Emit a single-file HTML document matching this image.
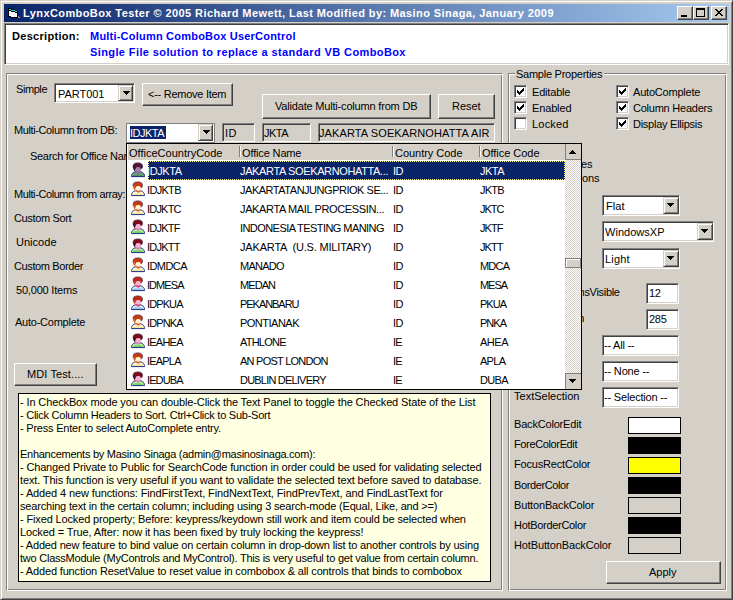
<!DOCTYPE html>
<html><head><meta charset="utf-8">
<style>
html,body{margin:0;padding:0;}
body{width:733px;height:600px;overflow:hidden;background:#d4d0c8;position:relative;font:11px/13px "Liberation Sans", sans-serif;}
.b{position:absolute;box-sizing:border-box;}
.t{position:absolute;white-space:pre;font:11px/13px "Liberation Sans", sans-serif;z-index:5;}
.raised{border:1px solid;border-color:#fff #404040 #404040 #fff;box-shadow:inset -1px -1px #808080;background:#d4d0c8;}
.sunken{border:1px solid;border-color:#808080 #fff #fff #808080;box-shadow:inset 1px 1px #404040,inset -1px -1px #d4d0c8;background:#fff;}
.etched{border:1px solid;border-color:#808080 #fff #fff #808080;box-shadow:inset 1px 1px #fff,inset -1px -1px #808080;}
.dis{background:#d4d0c8;}
.cbtn{border:1px solid;border-color:#d4d0c8 #404040 #404040 #d4d0c8;box-shadow:inset 1px 1px #fff,inset -1px -1px #808080;background:#d4d0c8;}
.arr{position:absolute;width:0;height:0;border-left:4px solid transparent;border-right:4px solid transparent;border-top:4px solid #000;}
.sw{position:absolute;box-sizing:border-box;border:1px solid #000;width:53px;height:17px;left:628px;}
.dd{z-index:10;}
</style></head><body>
<!-- window frame -->
<div class="b" style="left:0;top:0;width:733px;height:600px;border:1px solid;border-color:#d4d0c8 #404040 #404040 #d4d0c8;box-shadow:inset 1px 1px #fff,inset -1px -1px #808080;"></div>
<!-- title bar -->
<div class="b" style="left:4px;top:4px;width:725px;height:18px;background:linear-gradient(to right,#0a246a,#a6caf0);"></div>
<svg class="b" style="left:8px;top:8px;" width="14" height="11" viewBox="0 0 14 11" shape-rendering="crispEdges">
 <path fill="#000" d="M0 0h3v1h4v1h2v1h1v7h-10z"/>
 <rect x="0" y="9" width="3" height="1" fill="#0a246a"/>
 <rect x="1" y="1" width="2" height="1" fill="#00e8e8"/>
 <rect x="3" y="2" width="4" height="1" fill="#00e8e8"/>
 <rect x="7" y="3" width="2" height="1" fill="#00e8e8"/>
 <rect x="1" y="3" width="2" height="5" fill="#fff"/>
 <rect x="3" y="4" width="4" height="5" fill="#fff"/>
 <rect x="7" y="5" width="2" height="4" fill="#fff"/>
 <path d="M10 7.2L13 10H10z" fill="#9898b8"/>
</svg>
<div class="b raised" style="left:677px;top:6px;width:16px;height:14px;"><div class="b" style="left:3px;top:8px;width:6px;height:2px;background:#000"></div></div>
<div class="b raised" style="left:693px;top:6px;width:16px;height:14px;"><div class="b" style="left:2px;top:1px;width:9px;height:9px;border:1px solid #000;border-top-width:2px"></div></div>
<div class="b raised" style="left:711px;top:6px;width:16px;height:14px;">
 <svg class="b" style="left:3px;top:2px" width="8" height="7" viewBox="0 0 8 7" shape-rendering="crispEdges"><path fill="#000" d="M0 0h2v1h-2zM6 0h2v1h-2zM1 1h2v1h-2zM5 1h2v1h-2zM2 2h4v1h-4zM3 3h2v1h-2zM2 4h4v1h-4zM1 5h2v1h-2zM5 5h2v1h-2zM0 6h2v1h-2zM6 6h2v1h-2z"/></svg>
</div>
<!-- description -->
<div class="b sunken" style="left:4px;top:23px;width:725px;height:42px;"></div>
<!-- groups -->
<div class="b etched" style="left:6px;top:73px;width:497px;height:518px;"></div>
<div class="b etched" style="left:508px;top:73px;width:219px;height:518px;"></div>
<div class="b" style="left:515px;top:71px;width:89px;height:5px;background:#d4d0c8"></div>

<!-- left controls -->
<div class="b sunken" style="left:54px;top:83px;width:81px;height:20px;"><div class="b cbtn" style="left:63px;top:1px;width:15px;height:16px;"><svg class="b" style="left:4px;top:5px" width="7" height="4" shape-rendering="crispEdges"><path d="M0 0h7v1h-1v1h-1v1h-1v1h-1v-1h-1v-1h-1v-1h-1z" fill="#000"/></svg></div></div>
<div class="b raised" style="left:142px;top:83px;width:91px;height:23px;"></div>
<div class="b raised" style="left:262px;top:94px;width:169px;height:25px;"></div>
<div class="b raised" style="left:438px;top:94px;width:57px;height:25px;"></div>
<div class="b" style="left:126px;top:123px;width:89px;height:20px;border:1px solid #808080;background:#fff;">
  <div class="b" style="left:3px;top:2px;width:36px;height:13px;background:#0a246a"></div>
  <div class="b cbtn" style="left:71px;top:0px;width:15px;height:17px;"><svg class="b" style="left:4px;top:5px" width="7" height="4" shape-rendering="crispEdges"><path d="M0 0h7v1h-1v1h-1v1h-1v1h-1v-1h-1v-1h-1v-1h-1z" fill="#000"/></svg></div>
</div>
<div class="b sunken dis" style="left:222px;top:123px;width:33px;height:19px;"></div>
<div class="b sunken dis" style="left:262px;top:123px;width:49px;height:19px;"></div>
<div class="b sunken dis" style="left:318px;top:123px;width:177px;height:19px;"></div>
<div class="b raised" style="left:14px;top:363px;width:83px;height:23px;"></div>
<div class="b" style="left:18px;top:393px;width:473px;height:189px;border:1px solid #000;background:#ffffe1;"></div>

<!-- right controls -->
<svg width="0" height="0" style="position:absolute"><defs>
 <g id="chk"><path fill="#000" d="M6 0h1v3h-1zM5 1h1v3h-1zM4 2h1v3h-1zM0 2h1v3h-1zM1 3h1v3h-1zM2 4h1v3h-1zM3 3h1v3h-1z"/></g>
</defs></svg>
<div class="b sunken" style="left:514px;top:85px;width:13px;height:13px;"><svg class="b" style="left:2px;top:2px" width="7" height="7"><use href="#chk"/></svg></div>
<div class="b sunken" style="left:514px;top:101px;width:13px;height:13px;"><svg class="b" style="left:2px;top:2px" width="7" height="7"><use href="#chk"/></svg></div>
<div class="b sunken" style="left:514px;top:117px;width:13px;height:13px;"></div>
<div class="b sunken" style="left:616px;top:85px;width:13px;height:13px;"><svg class="b" style="left:2px;top:2px" width="7" height="7"><use href="#chk"/></svg></div>
<div class="b sunken" style="left:616px;top:101px;width:13px;height:13px;"><svg class="b" style="left:2px;top:2px" width="7" height="7"><use href="#chk"/></svg></div>
<div class="b sunken" style="left:616px;top:117px;width:13px;height:13px;"><svg class="b" style="left:2px;top:2px" width="7" height="7"><use href="#chk"/></svg></div>

<div class="b sunken" style="left:602px;top:195px;width:78px;height:21px;"><div class="b cbtn" style="left:60px;top:1px;width:16px;height:17px;"><svg class="b" style="left:3px;top:5px" width="7" height="4" shape-rendering="crispEdges"><path d="M0 0h7v1h-1v1h-1v1h-1v1h-1v-1h-1v-1h-1v-1h-1z" fill="#000"/></svg></div></div>
<div class="b sunken" style="left:602px;top:221px;width:112px;height:21px;"><div class="b cbtn" style="left:94px;top:1px;width:16px;height:17px;"><svg class="b" style="left:3px;top:5px" width="7" height="4" shape-rendering="crispEdges"><path d="M0 0h7v1h-1v1h-1v1h-1v1h-1v-1h-1v-1h-1v-1h-1z" fill="#000"/></svg></div></div>
<div class="b sunken" style="left:602px;top:248px;width:78px;height:21px;"><div class="b cbtn" style="left:60px;top:1px;width:16px;height:17px;"><svg class="b" style="left:3px;top:5px" width="7" height="4" shape-rendering="crispEdges"><path d="M0 0h7v1h-1v1h-1v1h-1v1h-1v-1h-1v-1h-1v-1h-1z" fill="#000"/></svg></div></div>
<div class="b sunken" style="left:646px;top:283px;width:33px;height:21px;"></div>
<div class="b sunken" style="left:646px;top:309px;width:33px;height:21px;"></div>
<div class="b sunken" style="left:602px;top:335px;width:77px;height:21px;"></div>
<div class="b sunken" style="left:602px;top:361px;width:77px;height:21px;"></div>
<div class="b sunken" style="left:602px;top:387px;width:77px;height:21px;"></div>
<div class="sw" style="top:417px;background:#fff"></div>
<div class="sw" style="top:437px;background:#000"></div>
<div class="sw" style="top:457px;background:#ffff00"></div>
<div class="sw" style="top:477px;background:#000"></div>
<div class="sw" style="top:497px;background:#d4d0c8"></div>
<div class="sw" style="top:517px;background:#000"></div>
<div class="sw" style="top:537px;background:#d4d0c8"></div>
<div class="b raised" style="left:606px;top:561px;width:115px;height:23px;"></div>

<div class=t style="left:23.00px;top:7px;color:#fff;letter-spacing:0.412px;font-weight:bold">LynxComboBox Tester © 2005 Richard Mewett, Last Modified by: Masino Sinaga, January 2009</div>
<div class=t style="left:12.00px;top:30px;color:#000;letter-spacing:0.301px;font-weight:bold">Description:</div>
<div class=t style="left:90.00px;top:30px;color:#0000ff;letter-spacing:0.215px;font-weight:bold">Multi-Column ComboBox UserControl</div>
<div class=t style="left:90.00px;top:46px;color:#0000ff;letter-spacing:0.394px;font-weight:bold">Single File solution to replace a standard VB ComboBox</div>
<div class=t style="left:16.00px;top:83px;color:#000;letter-spacing:-0.425px">Simple</div>
<div class=t style="left:58.00px;top:88px;color:#000;letter-spacing:-0.031px">PART001</div>
<div class=t style="left:148.00px;top:88px;color:#000;letter-spacing:-0.266px">&lt;-- Remove Item</div>
<div class=t style="left:275.00px;top:100px;color:#000;letter-spacing:-0.187px">Validate Multi-column from DB</div>
<div class=t style="left:452.00px;top:100px;color:#000;letter-spacing:-0.062px">Reset</div>
<div class=t style="left:14.00px;top:124px;color:#000;letter-spacing:-0.388px">Multi-Column from DB:</div>
<div class=t style="left:130.00px;top:127px;color:#fff;letter-spacing:-0.516px">IDJKTA</div>
<div class=t style="left:225.00px;top:127px;color:#000;letter-spacing:0.500px">ID</div>
<div class=t style="left:264.00px;top:127px;color:#000;letter-spacing:-0.526px">JKTA</div>
<div class=t style="left:319.00px;top:127px;color:#000;letter-spacing:0.108px">JAKARTA SOEKARNOHATTA AIR</div>
<div class=t style="left:30.00px;top:150px;color:#000;letter-spacing:-0.300px">Search for Office Name</div>
<div class=t style="left:14.00px;top:188px;color:#000;letter-spacing:-0.414px">Multi-Column from array:</div>
<div class=t style="left:14.00px;top:212px;color:#000;letter-spacing:-0.364px">Custom Sort</div>
<div class=t style="left:16.00px;top:235.5px;color:#000;letter-spacing:0.023px">Unicode</div>
<div class=t style="left:14.00px;top:260px;color:#000;letter-spacing:-0.374px">Custom Border</div>
<div class=t style="left:16.00px;top:284px;color:#000;letter-spacing:-0.190px">50,000 Items</div>
<div class=t style="left:15.00px;top:316px;color:#000;letter-spacing:-0.240px">Auto-Complete</div>
<div class=t style="left:27.00px;top:368px;color:#000;letter-spacing:0.098px">MDI Test....</div>
<div class=t style="left:20.00px;top:395.5px;color:#000;letter-spacing:-0.123px">- In CheckBox mode you can double-Click the Text Panel to toggle the Checked State of the List</div>
<div class=t style="left:20.00px;top:408.5px;color:#000;letter-spacing:-0.251px">- Click Column Headers to Sort. Ctrl+Click to Sub-Sort</div>
<div class=t style="left:20.00px;top:421.5px;color:#000;letter-spacing:-0.217px">- Press Enter to select AutoComplete entry.</div>
<div class=t style="left:20.00px;top:447.5px;color:#000;letter-spacing:-0.271px">Enhancements by Masino Sinaga (admin@masinosinaga.com):</div>
<div class=t style="left:20.00px;top:460.5px;color:#000;letter-spacing:-0.159px">- Changed Private to Public for SearchCode function in order could be used for validating selected</div>
<div class=t style="left:20.00px;top:473.5px;color:#000;letter-spacing:-0.139px">text. This function is very useful if you want to validate the selected text before saved to database.</div>
<div class=t style="left:20.00px;top:486.5px;color:#000;letter-spacing:-0.114px">- Added 4 new functions: FindFirstText, FindNextText, FindPrevText, and FindLastText for</div>
<div class=t style="left:20.00px;top:499.5px;color:#000;letter-spacing:-0.182px">searching text in the certain column; including using 3 search-mode (Equal, Like, and &gt;=)</div>
<div class=t style="left:20.00px;top:512.5px;color:#000;letter-spacing:-0.145px">- Fixed Locked property; Before: keypress/keydown still work and item could be selected when</div>
<div class=t style="left:20.00px;top:525.5px;color:#000;letter-spacing:-0.123px">Locked = True, After: now it has been fixed by truly locking the keypress!</div>
<div class=t style="left:20.00px;top:538.5px;color:#000;letter-spacing:-0.166px">- Added new feature to bind value on certain column in drop-down list to another controls by using</div>
<div class=t style="left:20.00px;top:551.5px;color:#000;letter-spacing:-0.234px">two ClassModule (MyControls and MyControl). This is very useful to get value from certain column.</div>
<div class=t style="left:20.00px;top:564.5px;color:#000;letter-spacing:-0.153px">- Added function ResetValue to reset value in combobox &amp; all controls that binds to combobox</div>
<div class=t style="left:516.00px;top:68px;color:#000;letter-spacing:-0.250px">Sample Properties</div>
<div class=t style="left:532.00px;top:85.5px;color:#000;letter-spacing:-0.181px">Editable</div>
<div class=t style="left:532.00px;top:101.5px;color:#000;letter-spacing:-0.146px">Enabled</div>
<div class=t style="left:532.00px;top:117.5px;color:#000;letter-spacing:0.203px">Locked</div>
<div class=t style="left:633.00px;top:85.5px;color:#000;letter-spacing:-0.202px">AutoComplete</div>
<div class=t style="left:633.00px;top:101.5px;color:#000;letter-spacing:-0.234px">Column Headers</div>
<div class=t style="left:633.00px;top:117.5px;color:#000;letter-spacing:-0.257px">Display Ellipsis</div>
<div class=t style="left:581.00px;top:158px;color:#000;letter-spacing:-0.125px">es</div>
<div class=t style="left:582.00px;top:172px;color:#000;letter-spacing:-0.125px">ons</div>
<div class=t style="left:606.00px;top:199.5px;color:#000;letter-spacing:0.052px">Flat</div>
<div class=t style="left:605.00px;top:226px;color:#000;letter-spacing:0.025px">WindowsXP</div>
<div class=t style="left:605.00px;top:252.5px;color:#000;letter-spacing:0.160px">Light</div>
<div class=t style="left:548.28px;top:286px;color:#000;letter-spacing:-0.300px">ListItemsVisible</div>
<div class=t style="left:541.65px;top:312px;color:#000;letter-spacing:-0.300px">ListWidth</div>
<div class=t style="left:649.00px;top:286.5px;color:#000;letter-spacing:-0.300px">12</div>
<div class=t style="left:649.00px;top:312.5px;color:#000;letter-spacing:-0.300px">285</div>
<div class=t style="left:604.00px;top:338.5px;color:#000;letter-spacing:-0.236px">-- All --</div>
<div class=t style="left:604.00px;top:364.5px;color:#000;letter-spacing:-0.174px">-- None --</div>
<div class=t style="left:604.00px;top:390.5px;color:#000;letter-spacing:-0.181px">-- Selection --</div>
<div class=t style="left:514.00px;top:390px;color:#000;letter-spacing:0.005px">TextSelection</div>
<div class=t style="left:514.00px;top:418px;color:#000;letter-spacing:-0.184px">BackColorEdit</div>
<div class=t style="left:514.00px;top:438px;color:#000;letter-spacing:-0.363px">ForeColorEdit</div>
<div class=t style="left:514.00px;top:458px;color:#000;letter-spacing:-0.181px">FocusRectColor</div>
<div class=t style="left:514.00px;top:479px;color:#000;letter-spacing:-0.381px">BorderColor</div>
<div class=t style="left:514.00px;top:499px;color:#000;letter-spacing:-0.146px">ButtonBackColor</div>
<div class=t style="left:514.00px;top:519px;color:#000;letter-spacing:-0.302px">HotBorderColor</div>
<div class=t style="left:514.00px;top:539px;color:#000;letter-spacing:-0.128px">HotButtonBackColor</div>
<div class=t style="left:649.00px;top:566px;color:#000;letter-spacing:-0.008px">Apply</div>

<!-- dropdown -->
<div class="b dd" style="left:126px;top:143px;width:456px;height:247px;border:1px solid #000;background:#fff;"></div>
<div class="b dd" style="left:127px;top:144px;width:438px;height:16px;background:#d4d0c8;box-shadow:inset 1px 0 #fff;"></div>
<div class="b dd" style="left:239px;top:146px;width:1px;height:11px;background:#808080;box-shadow:1px 0 #fff"></div>
<div class="b dd" style="left:392px;top:146px;width:1px;height:11px;background:#808080;box-shadow:1px 0 #fff"></div>
<div class="b dd" style="left:479px;top:146px;width:1px;height:11px;background:#808080;box-shadow:1px 0 #fff"></div>
<div class="b dd" style="left:148px;top:161px;width:417px;height:19px;background:#0a246a;border:1px dotted #ffff80;"></div>
<div class="b dd" style="left:565px;top:144px;width:16px;height:245px;background:repeating-conic-gradient(#d4d0c8 0 25%,#fff 0 50%) 0 0/2px 2px;"></div>
<div class="b dd" style="left:565px;top:144px;width:16px;height:16px;background:#d4d0c8;border-left:1px solid #808080;border-bottom:1px solid #808080;"><svg class="b" style="left:3px;top:6px" width="7" height="4" shape-rendering="crispEdges"><path d="M0 4h7v-1h-1v-1h-1v-1h-1v-1h-1v1h-1v1h-1v1h-1z" fill="#000"/></svg></div>
<div class="b dd" style="left:565px;top:373px;width:16px;height:16px;background:#d4d0c8;border-left:1px solid #808080;border-top:1px solid #808080;"><svg class="b" style="left:3px;top:5px" width="7" height="4" shape-rendering="crispEdges"><path d="M0 0h7v1h-1v1h-1v1h-1v1h-1v-1h-1v-1h-1v-1h-1z" fill="#000"/></svg></div>
<div class="b dd" style="left:565px;top:258px;width:16px;height:10px;background:#d4d0c8;border:1px solid #808080;box-shadow:inset 1px 1px #fff"></div>
<svg width="0" height="0" style="position:absolute"><defs>
 <g id="py">
 <path d="M1.5 14.6 C1.5 11 4 9.6 8 9.6 C12 9.6 14.5 11 14.5 14.6 Z" fill="#fffbe0" stroke="#1c2c88" stroke-width="1"/>
 <path d="M2.6 14 C3 12.6 5 12.2 8 12.2 C11 12.2 13 12.6 13.4 14 Z" fill="#f4e890"/>
 <ellipse cx="7.8" cy="4.3" rx="4.7" ry="3.4" fill="#c83a12" stroke="#402040" stroke-width="0.7"/>
 <path d="M3.2 4.5 C3.2 7.5 4 8.8 5.2 9.4 L5.4 5 Z" fill="#e06018"/>
 <ellipse cx="8.2" cy="7.3" rx="2.6" ry="2.9" fill="#fff4dc"/>
 <path d="M5.8 8.6 C6.8 10.2 9.6 10.2 10.6 8.6 L10.2 10.6 C9.2 12 7.2 12 6.2 10.6 Z" fill="#f05a20"/>
 <path d="M4.2 3.8 C5.5 2 10 2 11.8 4.4 L11.8 5.8 C10 4.8 7 4.6 5.2 5.8 Z" fill="#c83a12"/>
</g>
<g id="pg">
 <path d="M1.5 14.6 C1.5 11 4 9.6 8 9.6 C12 9.6 14.5 11 14.5 14.6 Z" fill="#b8f0a0" stroke="#1c2c88" stroke-width="1"/>
 <path d="M2.6 14 C3 12.6 5 12.2 8 12.2 C11 12.2 13 12.6 13.4 14 Z" fill="#70d060"/>
 <ellipse cx="7.8" cy="4.3" rx="4.7" ry="3.4" fill="#7c0c18" stroke="#402040" stroke-width="0.7"/>
 <path d="M3.2 4.5 C3.2 7.5 4 8.8 5.2 9.4 L5.4 5 Z" fill="#40081c"/>
 <ellipse cx="8.2" cy="7.3" rx="2.6" ry="2.9" fill="#f4b4d4"/>
 <path d="M5.8 8.6 C6.8 10.2 9.6 10.2 10.6 8.6 L10.2 10.6 C9.2 12 7.2 12 6.2 10.6 Z" fill="#e878b0"/>
 <path d="M4.2 3.8 C5.5 2 10 2 11.8 4.4 L11.8 5.8 C10 4.8 7 4.6 5.2 5.8 Z" fill="#7c0c18"/>
</g>
<g id="pb">
 <path d="M1.5 14.6 C1.5 11 4 9.6 8 9.6 C12 9.6 14.5 11 14.5 14.6 Z" fill="#d8eefc" stroke="#1c2c88" stroke-width="1"/>
 <path d="M2.6 14 C3 12.6 5 12.2 8 12.2 C11 12.2 13 12.6 13.4 14 Z" fill="#98c8ec"/>
 <ellipse cx="7.8" cy="4.3" rx="4.7" ry="3.4" fill="#c02814" stroke="#402040" stroke-width="0.7"/>
 <path d="M3.2 4.5 C3.2 7.5 4 8.8 5.2 9.4 L5.4 5 Z" fill="#d04020"/>
 <ellipse cx="8.2" cy="7.3" rx="2.6" ry="2.9" fill="#f8b8dc"/>
 <path d="M5.8 8.6 C6.8 10.2 9.6 10.2 10.6 8.6 L10.2 10.6 C9.2 12 7.2 12 6.2 10.6 Z" fill="#e03860"/>
 <path d="M4.2 3.8 C5.5 2 10 2 11.8 4.4 L11.8 5.8 C10 4.8 7 4.6 5.2 5.8 Z" fill="#c02814"/>
</g>
</defs></svg>
<svg width="0" height="0" style="position:absolute"><defs><mask id="selmask"><use href="#pg" style="filter:brightness(0) invert(1)"/></mask></defs></svg>
<svg class="b" style="left:130px;top:162px;z-index:15" width="16" height="17" viewBox="0 0 16 17"><use href="#pg"/><rect x="0" y="0" width="16" height="17" fill="#0a246a" opacity="0.35" mask="url(#selmask)"/></svg>
<svg class="b" style="left:130px;top:181px;z-index:15" width="16" height="17" viewBox="0 0 16 17"><use href="#py"/></svg>
<svg class="b" style="left:130px;top:200px;z-index:15" width="16" height="17" viewBox="0 0 16 17"><use href="#py"/></svg>
<svg class="b" style="left:130px;top:219px;z-index:15" width="16" height="17" viewBox="0 0 16 17"><use href="#pg"/></svg>
<svg class="b" style="left:130px;top:238px;z-index:15" width="16" height="17" viewBox="0 0 16 17"><use href="#pg"/></svg>
<svg class="b" style="left:130px;top:257px;z-index:15" width="16" height="17" viewBox="0 0 16 17"><use href="#py"/></svg>
<svg class="b" style="left:130px;top:276px;z-index:15" width="16" height="17" viewBox="0 0 16 17"><use href="#pb"/></svg>
<svg class="b" style="left:130px;top:295px;z-index:15" width="16" height="17" viewBox="0 0 16 17"><use href="#pb"/></svg>
<svg class="b" style="left:130px;top:314px;z-index:15" width="16" height="17" viewBox="0 0 16 17"><use href="#py"/></svg>
<svg class="b" style="left:130px;top:333px;z-index:15" width="16" height="17" viewBox="0 0 16 17"><use href="#pg"/></svg>
<svg class="b" style="left:130px;top:352px;z-index:15" width="16" height="17" viewBox="0 0 16 17"><use href="#py"/></svg>
<svg class="b" style="left:130px;top:371px;z-index:15" width="16" height="17" viewBox="0 0 16 17"><use href="#pg"/></svg>
<div class=t style="left:129.00px;top:147px;color:#000;letter-spacing:0.009px;z-index:20">OfficeCountryCode</div>
<div class=t style="left:242.00px;top:147px;color:#000;letter-spacing:-0.144px;z-index:20">Office Name</div>
<div class=t style="left:395.00px;top:147px;color:#000;letter-spacing:-0.034px;z-index:20">Country Code</div>
<div class=t style="left:482.00px;top:147px;color:#000;letter-spacing:-0.039px;z-index:20">Office Code</div>
<div class=t style="left:147.00px;top:165px;color:#fff;letter-spacing:-0.396px;z-index:20">IDJKTA</div>
<div class=t style="left:240.00px;top:165px;color:#fff;letter-spacing:-0.365px;z-index:20">JAKARTA SOEKARNOHATTA...</div>
<div class=t style="left:393.00px;top:165px;color:#fff;letter-spacing:-0.500px;z-index:20">ID</div>
<div class=t style="left:480.00px;top:165px;color:#fff;letter-spacing:-0.526px;z-index:20">JKTA</div>
<div class=t style="left:147.00px;top:184px;color:#000;letter-spacing:-0.681px;z-index:20">IDJKTB</div>
<div class=t style="left:240.00px;top:184px;color:#000;letter-spacing:-0.477px;z-index:20">JAKARTATANJUNGPRIOK SE...</div>
<div class=t style="left:393.00px;top:184px;color:#000;letter-spacing:-0.500px;z-index:20">ID</div>
<div class=t style="left:480.00px;top:184px;color:#000;letter-spacing:-0.802px;z-index:20">JKTB</div>
<div class=t style="left:147.00px;top:203px;color:#000;letter-spacing:-0.800px;z-index:20">IDJKTC</div>
<div class=t style="left:240.00px;top:203px;color:#000;letter-spacing:-0.364px;z-index:20">JAKARTA MAIL PROCESSIN...</div>
<div class=t style="left:393.00px;top:203px;color:#000;letter-spacing:-0.500px;z-index:20">ID</div>
<div class=t style="left:480.00px;top:203px;color:#000;letter-spacing:-1.000px;z-index:20">JKTC</div>
<div class=t style="left:147.00px;top:222px;color:#000;letter-spacing:-0.756px;z-index:20">IDJKTF</div>
<div class=t style="left:240.00px;top:222px;color:#000;letter-spacing:-0.565px;z-index:20">INDONESIA TESTING MANING</div>
<div class=t style="left:393.00px;top:222px;color:#000;letter-spacing:-0.500px;z-index:20">ID</div>
<div class=t style="left:480.00px;top:222px;color:#000;letter-spacing:-0.927px;z-index:20">JKTF</div>
<div class=t style="left:147.00px;top:241px;color:#000;letter-spacing:-0.756px;z-index:20">IDJKTT</div>
<div class=t style="left:240.00px;top:241px;color:#000;letter-spacing:-0.174px;z-index:20">JAKARTA  (U.S. MILITARY)</div>
<div class=t style="left:393.00px;top:241px;color:#000;letter-spacing:-0.500px;z-index:20">ID</div>
<div class=t style="left:480.00px;top:241px;color:#000;letter-spacing:-0.927px;z-index:20">JKTT</div>
<div class=t style="left:147.00px;top:260px;color:#000;letter-spacing:-0.578px;z-index:20">IDMDCA</div>
<div class=t style="left:240.00px;top:260px;color:#000;letter-spacing:-0.756px;z-index:20">MANADO</div>
<div class=t style="left:393.00px;top:260px;color:#000;letter-spacing:-0.500px;z-index:20">ID</div>
<div class=t style="left:480.00px;top:260px;color:#000;letter-spacing:-0.797px;z-index:20">MDCA</div>
<div class=t style="left:147.00px;top:279px;color:#000;letter-spacing:-0.938px;z-index:20">IDMESA</div>
<div class=t style="left:240.00px;top:279px;color:#000;letter-spacing:-0.934px;z-index:20">MEDAN</div>
<div class=t style="left:393.00px;top:279px;color:#000;letter-spacing:-0.500px;z-index:20">ID</div>
<div class=t style="left:480.00px;top:279px;color:#000;letter-spacing:-1.062px;z-index:20">MESA</div>
<div class=t style="left:147.00px;top:298px;color:#000;letter-spacing:-0.894px;z-index:20">IDPKUA</div>
<div class=t style="left:240.00px;top:298px;color:#000;letter-spacing:-1.045px;z-index:20">PEKANBARU</div>
<div class=t style="left:393.00px;top:298px;color:#000;letter-spacing:-0.500px;z-index:20">ID</div>
<div class=t style="left:480.00px;top:298px;color:#000;letter-spacing:-0.990px;z-index:20">PKUA</div>
<div class=t style="left:147.00px;top:317px;color:#000;letter-spacing:-0.894px;z-index:20">IDPNKA</div>
<div class=t style="left:240.00px;top:317px;color:#000;letter-spacing:-0.510px;z-index:20">PONTIANAK</div>
<div class=t style="left:393.00px;top:317px;color:#000;letter-spacing:-0.500px;z-index:20">ID</div>
<div class=t style="left:480.00px;top:317px;color:#000;letter-spacing:-0.990px;z-index:20">PNKA</div>
<div class=t style="left:147.00px;top:336px;color:#000;letter-spacing:-0.772px;z-index:20">IEAHEA</div>
<div class=t style="left:240.00px;top:336px;color:#000;letter-spacing:-0.773px;z-index:20">ATHLONE</div>
<div class=t style="left:393.00px;top:336px;color:#000;letter-spacing:-0.906px;z-index:20">IE</div>
<div class=t style="left:480.00px;top:336px;color:#000;letter-spacing:-0.490px;z-index:20">AHEA</div>
<div class=t style="left:147.00px;top:355px;color:#000;letter-spacing:-0.806px;z-index:20">IEAPLA</div>
<div class=t style="left:240.00px;top:355px;color:#000;letter-spacing:-0.748px;z-index:20">AN POST LONDON</div>
<div class=t style="left:393.00px;top:355px;color:#000;letter-spacing:-0.906px;z-index:20">IE</div>
<div class=t style="left:480.00px;top:355px;color:#000;letter-spacing:-0.714px;z-index:20">APLA</div>
<div class=t style="left:147.00px;top:374px;color:#000;letter-spacing:-0.894px;z-index:20">IEDUBA</div>
<div class=t style="left:240.00px;top:374px;color:#000;letter-spacing:-0.794px;z-index:20">DUBLIN DELIVERY</div>
<div class=t style="left:393.00px;top:374px;color:#000;letter-spacing:-0.906px;z-index:20">IE</div>
<div class=t style="left:480.00px;top:374px;color:#000;letter-spacing:-0.688px;z-index:20">DUBA</div>
</body></html>
